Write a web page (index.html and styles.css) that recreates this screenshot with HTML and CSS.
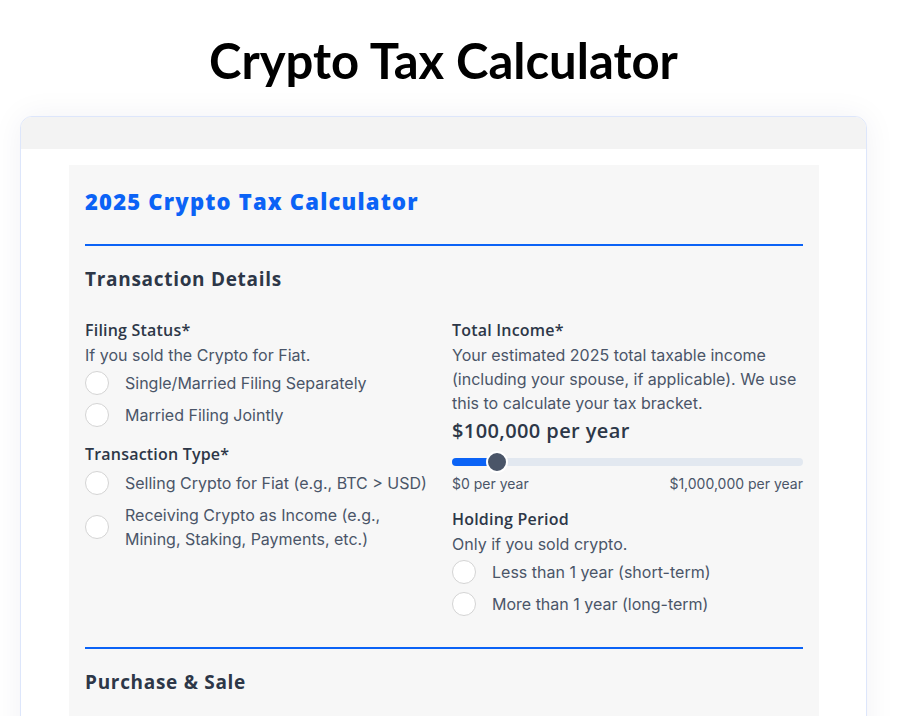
FILE: index.html
```html
<!DOCTYPE html>
<html lang="en">
<head>
<meta charset="utf-8">
<title>Crypto Tax Calculator</title>
<link rel="stylesheet" href="styles.css">
</head>
<body>
<h1 class="page-title">Crypto Tax Calculator</h1>
<div class="card">
  <div class="card-head"></div>
  <div class="card-body">
    <div class="panel">
      <h2 class="calc-title">2025 Crypto Tax Calculator</h2>
      <hr class="rule">
      <h3 class="section-title">Transaction Details</h3>
      <div class="cols">
        <div class="col">
          <div class="field">
            <div class="label">Filing Status*</div>
            <div class="help">If you sold the Crypto for Fiat.</div>
            <div class="radio"><span class="dot"></span><span class="rtext">Single/Married Filing Separately</span></div>
            <div class="radio"><span class="dot"></span><span class="rtext">Married Filing Jointly</span></div>
          </div>
          <div class="field">
            <div class="label">Transaction Type*</div>
            <div class="radio"><span class="dot"></span><span class="rtext">Selling Crypto for Fiat (e.g., BTC &gt; USD)</span></div>
            <div class="radio"><span class="dot"></span><span class="rtext">Receiving Crypto as Income (e.g., Mining, Staking, Payments, etc.)</span></div>
          </div>
        </div>
        <div class="col">
          <div class="field field-slider">
            <div class="label">Total Income*</div>
            <div class="help">Your estimated 2025 total taxable income (including your spouse, if applicable). We use this to calculate your tax bracket.</div>
            <div class="amount">$100,000 per year</div>
            <div class="slider">
              <div class="track"><div class="fill" style="width: 45px"></div><span class="thumb" style="left: 45px"></span></div>
              <div class="ends"><span>$0 per year</span><span>$1,000,000 per year</span></div>
            </div>
          </div>
          <div class="field">
            <div class="label">Holding Period</div>
            <div class="help">Only if you sold crypto.</div>
            <div class="radio"><span class="dot"></span><span class="rtext">Less than 1 year (short-term)</span></div>
            <div class="radio"><span class="dot"></span><span class="rtext">More than 1 year (long-term)</span></div>
          </div>
        </div>
      </div>
      <hr class="rule rule-2">
      <h3 class="section-title">Purchase &amp; Sale</h3>
    </div>
  </div>
</div>
</body>
</html>
```

FILE: styles.css
```css
* { box-sizing: border-box; }
html, body { margin: 0; padding: 0; }
body {
  background: #ffffff;
  font-family: Inter, "Liberation Sans", sans-serif;
  color: #4a5568;
  padding: 0 36px 0 20px;
  height: 716px;
  overflow: hidden;
}
.page-title {
  font-family: Lato, "Liberation Sans", sans-serif;
  font-weight: 700;
  font-size: 49px;
  line-height: 58px;
  color: #000;
  text-align: center;
  margin: 31px 0 27px;
}
.card {
  border: 1px solid #dde6fb;
  border-radius: 12px;
  background: #fff;
  box-shadow: 0 0 32px rgba(20, 30, 80, 0.06);
  overflow: hidden;
}
.card-head {
  height: 32px;
  background: #f3f3f3;
}
.card-body {
  padding: 16px 47px 0 48px;
}
.panel {
  background: #f7f7f7;
  padding: 16px 16px 40px;
  height: 600px;
}
.calc-title {
  font-family: "Open Sans", sans-serif;
  font-weight: 800;
  font-size: 22px;
  line-height: 40px;
  letter-spacing: 1.2px;
  color: #0b63f6;
  margin: 0;
}
.rule {
  border: 0;
  height: 2px;
  background: #0b63f6;
  margin: 23px 0 0;
}
.rule-2 { margin-top: 17px; }
.section-title {
  font-family: "Open Sans", sans-serif;
  font-weight: 700;
  font-size: 19px;
  line-height: 28px;
  letter-spacing: 0.7px;
  color: #2d3748;
  margin: 19px 0 0;
}
.cols {
  display: grid;
  grid-template-columns: 1fr 1fr;
  column-gap: 16px;
  margin-top: 24px;
}
.field { margin-bottom: 10px; }
.field-slider { margin-bottom: 12px; }
.label {
  font-family: "Open Sans", sans-serif;
  font-weight: 600;
  font-size: 16px;
  line-height: 26px;
  letter-spacing: 0.2px;
  color: #2d3748;
}
.help {
  font-size: 16px;
  line-height: 24px;
  color: #4a5568;
}
.radio {
  display: flex;
  align-items: center;
  gap: 16px;
  padding: 4px 0;
  font-size: 16px;
  line-height: 24px;
  color: #4a5568;
}
.dot {
  flex: 0 0 24px;
  width: 24px;
  height: 24px;
  border-radius: 50%;
  background: #fff;
  border: 1px solid #d4d4d4;
}
.amount {
  font-family: "Open Sans", sans-serif;
  font-weight: 600;
  font-size: 20px;
  line-height: 32px;
  letter-spacing: 0.4px;
  color: #2d3748;
}
.slider { margin-top: 11px; }
.track {
  position: relative;
  height: 8px;
  border-radius: 4px;
  background: #e2e8f0;
}
.fill {
  height: 8px;
  border-radius: 4px;
  background: #0b63f6;
}
.thumb {
  position: absolute;
  top: 50%;
  width: 22px;
  height: 22px;
  margin: -11px 0 0 -11px;
  border-radius: 50%;
  background: #4a5568;
  border: 2px solid #fff;
}
.ends {
  display: flex;
  justify-content: space-between;
  font-size: 14px;
  line-height: 20px;
  margin-top: 8px;
  color: #4a5568;
}
```
